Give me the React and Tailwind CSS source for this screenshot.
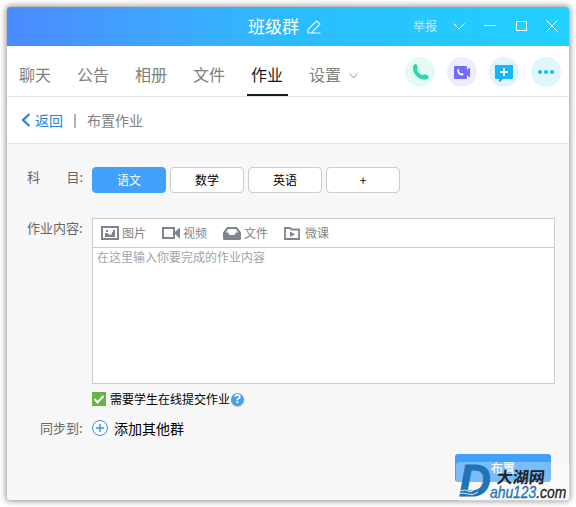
import { useState } from 'react';

const TABS = ['聊天', '公告', '相册', '文件', '作业', '设置'];
const SUBJECTS = ['语文', '数学', '英语', '+'];

const PhoneIcon = () => (
  <svg width="18" height="18" viewBox="0 0 18 18">
    <path d="M2.800 1.200C4.200.6 5 1.700 5.500 3.800c.4 1.700-.5 2.300-.5 3 .6 2.200 3 4.600 5 5.400.9 0 1.500-1.200 3.200-.6 2.300.8 4.200 1.600 3.500 2.900-1 1.900-3.800 2.700-6.700 1.800C5.500 14.900 1.800 11 1 6.500.6 4.200 1.200 2 2.800 1.200z" fill="#26d9ad" />
  </svg>
);

const CallVideoIcon = () => (
  <svg width="18" height="16" viewBox="0 0 18 16">
    <path d="M2 2h11a1 1 0 0 1 1 1v11a1 1 0 0 1-1 1H2a1 1 0 0 1-1-1V3a1 1 0 0 1 1-1zM14 6l2-2h1v9h-1l-2-2z" fill="#726bff" />
    <path d="M5 5c.9-.4 1.300.6 1.400 1.400L5.900 7.300c.4 1.100 1.200 1.900 2.300 2.300l1-.4c1 .3 1.900.9 1.300 1.600-.8 1.100-2.600.9-4-.1C5 9.700 4.200 8 4.200 6.600c0-.8.300-1.400.8-1.600z" fill="#fff" />
  </svg>
);

const ChatPlusIcon = () => (
  <svg className="mt-px" width="18" height="18" viewBox="0 0 18 18">
    <path d="M1 1h16a1 1 0 0 1 1 1v12a1 1 0 0 1-1 1H8l-3 3H4v-3H1a1 1 0 0 1-1-1V2a1 1 0 0 1 1-1z" fill="#12b7f5" />
    <path d="M5 8h8M9 4v8" stroke="#fff" strokeWidth="2" />
  </svg>
);

const MoreIcon = () => (
  <svg width="18" height="6" viewBox="0 0 18 6" fill="#12b7f5">
    <circle cx="3" cy="3" r="2" />
    <circle cx="9" cy="3" r="2" />
    <circle cx="15" cy="3" r="2" />
  </svg>
);

const PictureIcon = () => (
  <svg width="18" height="14" viewBox="0 0 18 14">
    <path d="M1 1h16v12H1z" fill="none" stroke="#80858d" strokeWidth="2" />
    <path d="M4 11V7h2l3 2 2-1V6h1V4h2v7z" fill="#80858d" />
    <path d="M5 4h2v2H5z" fill="#80858d" />
  </svg>
);

const VideoIcon = () => (
  <svg width="18" height="12" viewBox="0 0 18 12">
    <path d="M1 1h11v10H1z" fill="none" stroke="#80858d" strokeWidth="2" />
    <path d="M13 5l4-4h1v10h-1l-4-4z" fill="#80858d" />
  </svg>
);

const FileIcon = () => (
  <svg width="18" height="13" viewBox="0 0 18 13">
    <path d="M4 0h10l4 5.500v6a1.500 1.500 0 0 1-1.500 1.500h-15A1.500 1.500 0 0 1 0 11.500v-6zm.8 2L3 5.500h2L6.500 8h5L13 5.500h2L13.200 2z" fill="#80858d" fillRule="evenodd" />
  </svg>
);

const LessonIcon = () => (
  <svg width="16" height="13" viewBox="0 0 16 13">
    <path d="M1 12V1h5l1.500 1.500H15V12z" fill="none" stroke="#80858d" strokeWidth="1.800" />
    <path d="M6 4.500v5.500L11 7.200z" fill="#80858d" />
  </svg>
);

const App = () => {
  const [tab, setTab] = useState('作业');
  const [subject, setSubject] = useState('语文');

  return (
    <div className="h-[507px] w-[576px] overflow-hidden bg-white p-[7px] font-['Noto_Sans_CJK_SC',sans-serif]">
      <div className="relative flex h-[493px] w-[562px] flex-col rounded-[3px] bg-[#f7f7f7] shadow-[0_0_6px_1px_rgba(0,0,0,0.45)]">
        {/* Title bar */}
        <header className="flex h-[39px] shrink-0 items-center rounded-t-[3px] bg-linear-to-r from-[#4b8aff] via-[#2bbcff] to-[#20d1ff] text-white">
          <h1 className="ml-[241px] pb-0.5 text-[17px] leading-6">班级群</h1>
          <svg className="ml-[8px]" width="14" height="14" viewBox="0 0 14 14" fill="none" stroke="#e0f6ff" strokeWidth="1.200">
            <path d="M1 13v-3.500L9.500 1 13 4l-8.500 9M1 13h12.500" />
          </svg>
          <button className="ml-[92px] pb-0.5 text-xs text-white/70">举报</button>
          <svg className="ml-[16px]" width="12" height="7" viewBox="0 0 12 7" fill="none" stroke="#fff">
            <path d="M.5.500L6 6l5.500-5.500" />
          </svg>
          <svg className="ml-[19px] -mt-0.5" width="12" height="1" viewBox="0 0 12 1">
            <path d="M0 .500h12" stroke="#fff" />
          </svg>
          <svg className="-mt-px ml-[20px]" width="11" height="10" viewBox="0 0 11 10" fill="none" stroke="#fff">
            <path d="M.5.500h10v9H.5z" />
          </svg>
          <svg className="-mt-0.5 ml-[19px]" width="12" height="12" viewBox="0 0 12 12" fill="none" stroke="#fff">
            <path d="M.5.500l11 11M11.500.500l-11 11" />
          </svg>
        </header>

        {/* Tabs */}
        <nav className="flex h-[51px] shrink-0 border-b border-[#e5e5e5] bg-white pl-2">
          {TABS.map((name) => (
            <button
              key={name}
              onClick={() => setTab(name)}
              className={`mr-[17px] flex w-[41px] items-center justify-center border-b-2 pr-px pt-2 text-base ${
                tab === name ? 'border-[#1a1a1a] text-[#1a1a1a]' : 'border-transparent text-[#808080]'
              }`}
            >
              {name}
            </button>
          ))}
          <svg className="-ml-[14px] mt-[27px]" width="9" height="6" viewBox="0 0 9 6" fill="none" stroke="#999">
            <path d="M.5.500l4 4.500 4-4.500" />
          </svg>
          <div className="ml-auto mr-2 mt-[11px] flex gap-3">
            <button className="flex size-[30px] items-center justify-center rounded-full bg-[#e4faf5] pl-px"><PhoneIcon /></button>
            <button className="flex size-[30px] items-center justify-center rounded-full bg-[#eeedff]"><CallVideoIcon /></button>
            <button className="flex size-[30px] items-center justify-center rounded-full bg-[#e0f3ff]"><ChatPlusIcon /></button>
            <button className="flex size-[30px] items-center justify-center rounded-full bg-[#e0f6ff]"><MoreIcon /></button>
          </div>
        </nav>

        {/* Breadcrumb */}
        <div className="flex h-[47px] shrink-0 items-center border-b border-[#e2e2e2] bg-white pl-[14px] text-sm text-[#808080]">
          <svg width="10" height="14" viewBox="0 0 10 14" fill="none" stroke="#2482dc" strokeWidth="2.200">
            <path d="M8.500 1L2 7l6.500 6" />
          </svg>
          <a className="ml-1 text-[#2482dc]">返回</a>
          <span className="ml-[11px] mt-0.5 h-[14px] w-[2px] bg-[#b3b3b3]" />
          <span className="ml-[11px]">布置作业</span>
        </div>

        {/* Form */}
        <main className="flex flex-col pl-5 text-[13px] text-[#666]">
          <div className="mt-[23px] flex h-[26px]">
            <div className="flex h-5 w-[65px] justify-between pr-[9px] leading-[19px]">
              <span>科</span>
              <span>目:</span>
            </div>
            <div className="flex gap-1">
              {SUBJECTS.map((name) => (
                <button
                  key={name}
                  onClick={() => setSubject(name)}
                  className={`w-[74px] rounded-[4px] border text-xs ${
                    subject === name ? 'border-[#40a0fa] bg-[#40a0fa] text-white' : 'border-[#ccc] bg-white text-black'
                  }`}
                >
                  {name}
                </button>
              ))}
            </div>
          </div>

          <div className="mt-[25px] flex">
            <span className="w-[65px] leading-5">作业内容:</span>
            <div className="h-[166px] w-[463px] border border-[#ccc] bg-white">
              <div className="flex h-[29px] items-center border-b border-[#ccc] pl-2 text-xs text-[#858585]">
                <PictureIcon />
                <span className="ml-[3px] mr-4">图片</span>
                <VideoIcon />
                <span className="ml-[3px] mr-4">视频</span>
                <FileIcon />
                <span className="ml-[3px] mr-4">文件</span>
                <LessonIcon />
                <span className="ml-[5px]">微课</span>
              </div>
              <p className="pl-1 text-xs leading-[17px] text-[#a3a3a3]">在这里输入你要完成的作业内容</p>
            </div>
          </div>

          <div className="ml-[65px] mt-[6px] flex h-[18px] items-center text-xs text-black">
            <svg width="14" height="14" viewBox="0 0 14 14">
              <path d="M0 0h14v14H0z" fill="#67b346" />
              <path d="M2.500 7l3 3.500L11.500 4" fill="none" stroke="#fff" strokeWidth="2" />
            </svg>
            <span className="ml-1">需要学生在线提交作业</span>
            <span className="ml-[1px] flex size-[13px] items-center justify-center rounded-full bg-[#47a3e4] font-['Liberation_Sans',sans-serif] text-[12px] font-bold leading-none text-white shadow-[0_1px_1px_#bbb]">
              ?
            </span>
          </div>

          <div className="mt-[10px] flex h-5 items-center">
            <span className="ml-[13px] w-[52px] pb-px">同步到:</span>
            <svg width="16" height="16" viewBox="0 0 16 16" fill="none" stroke="#3d94ec">
              <circle cx="8" cy="8" r="7.500" />
              <path d="M4 8h8M8 4v8" strokeWidth="1.400" />
            </svg>
            <span className="ml-[6px] text-sm text-black">添加其他群</span>
          </div>

          <button className="ml-[428px] mt-[16px] h-[28px] w-[96px] rounded-[3px] bg-[#40a0fa] text-xs font-medium text-white">
            布置
          </button>
        </main>

        {/* Site badge over the corner */}
        <div className="absolute left-[449px] top-[455px] h-[39px] w-[114px] rounded-[4px] bg-white/30">
          <span className="absolute left-[3px] top-px origin-left font-['Liberation_Sans',sans-serif] text-[44px] font-bold italic leading-[36px] text-[#2074b5] [-webkit-text-stroke:1px_#2074b5]">
            D
          </span>
          <svg className="absolute left-[2px] top-[27px]" width="30" height="10" viewBox="0 0 30 10" fill="none" stroke="#d9eafa">
            <path d="M2 2q5-2 8 0t6-1M0 5q5-2 10 0t10-2" />
          </svg>
          <span className="absolute left-[41px] top-[5px] -skew-x-6 whitespace-nowrap text-base font-bold leading-[18px] text-[#222]">
            大湖网
          </span>
          <span className="absolute left-[34px] top-[21px] origin-left scale-x-[0.84] whitespace-nowrap font-['Liberation_Sans',sans-serif] text-[16.500px] italic leading-[18px] text-[#222] [-webkit-text-stroke:0.3px]">
            <span className="text-[#2074b5]">ahu123</span>.com
          </span>
        </div>
      </div>
    </div>
  );
};

export default App;
